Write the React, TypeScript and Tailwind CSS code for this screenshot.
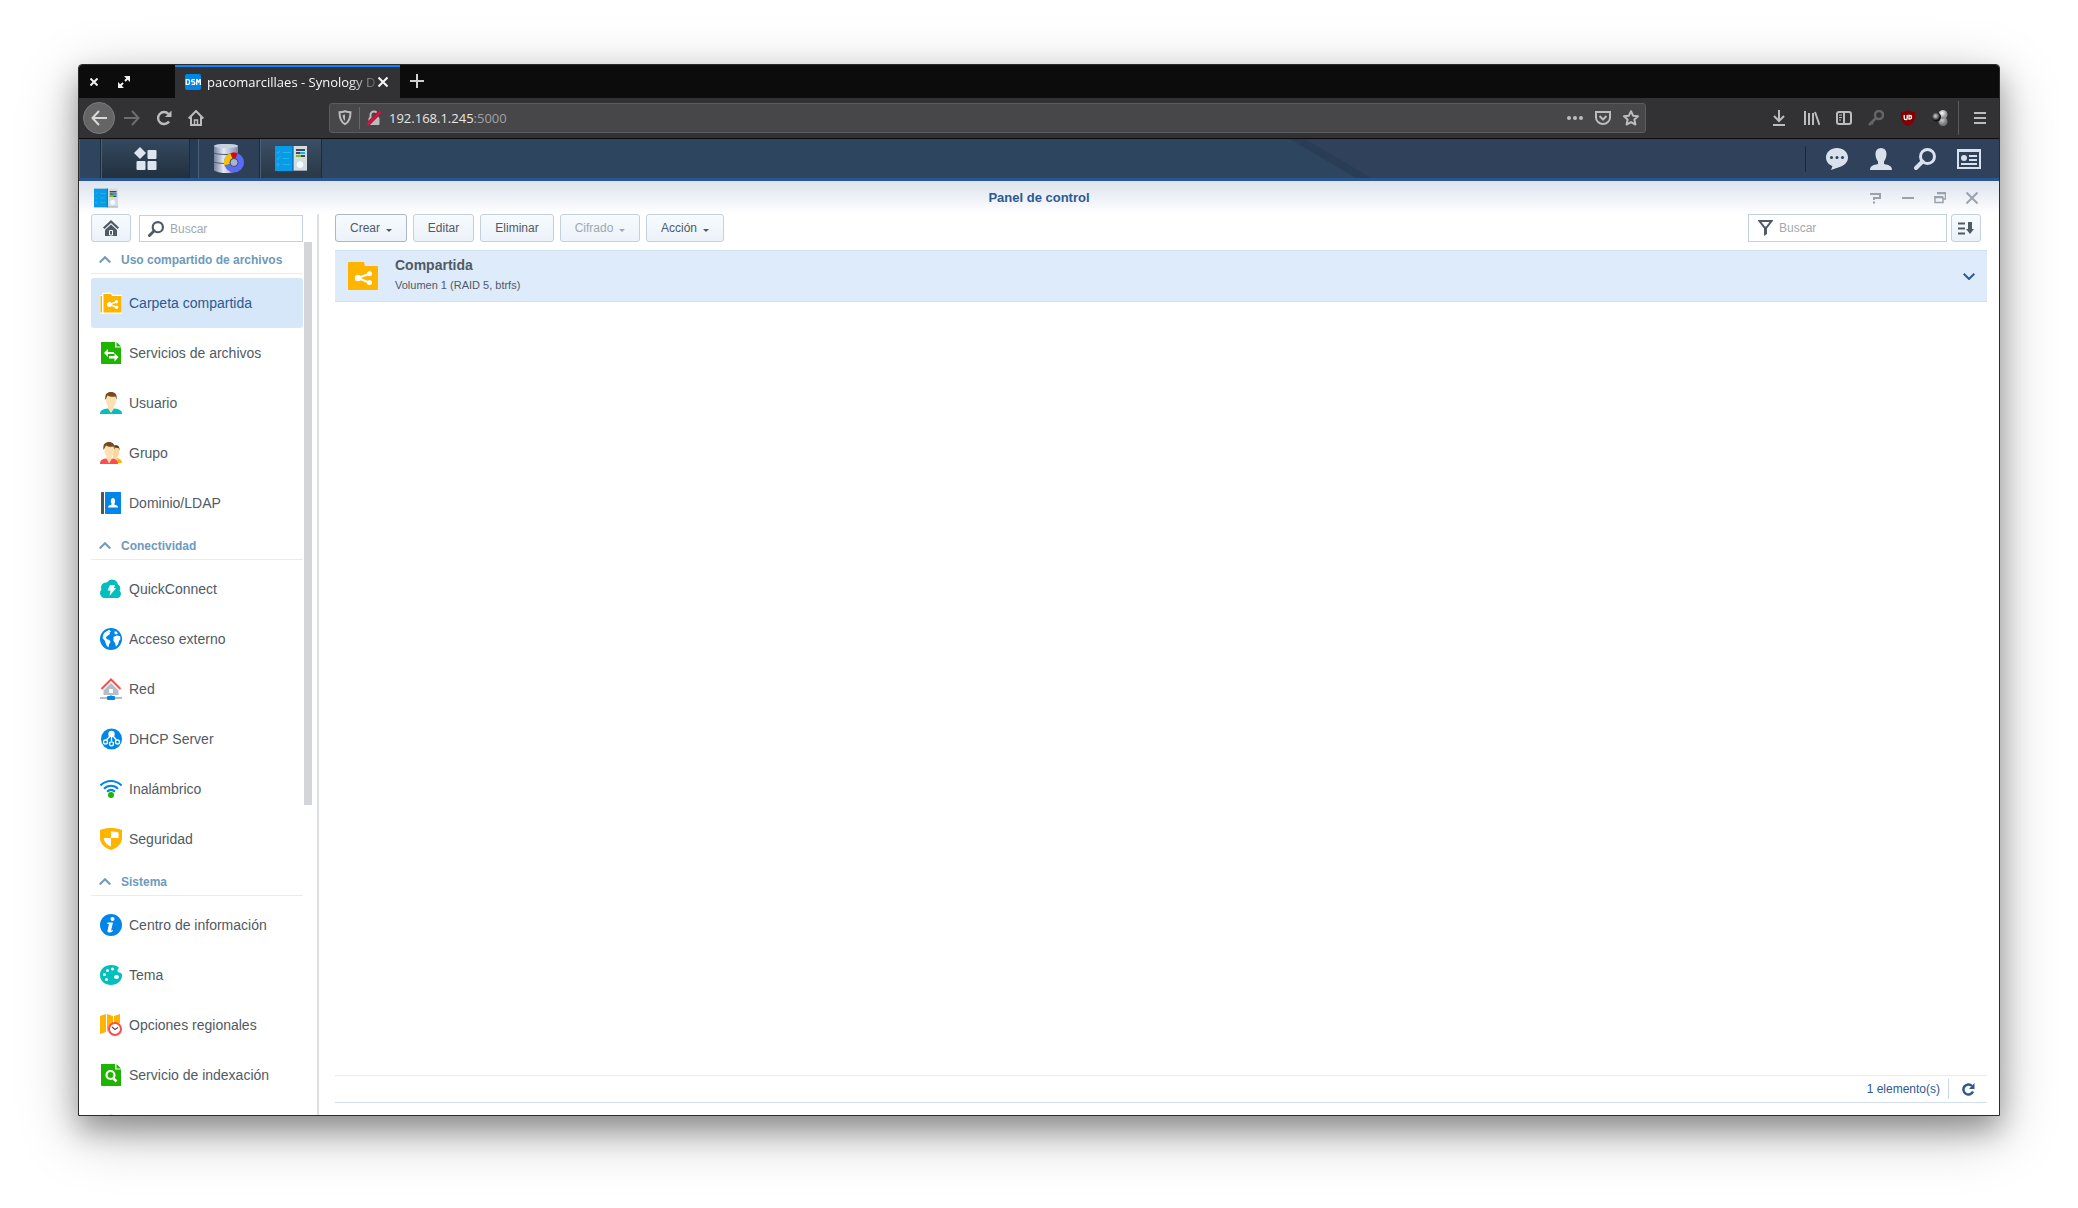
import React from "react";

type IconProps = { className?: string };

const font = "font-['Liberation_Sans',Arial,sans-serif]";

/* ---------- shared drawings ---------- */

function PanelLogo({ className }: IconProps) {
  return (
    <svg viewBox="0 0 32 25" className={className} aria-hidden="true">
      <rect x="18" y="0" width="14" height="25" fill="#d5dbe0" />
      <rect x="18" y="24" width="14" height="1" fill="#9aa3ab" />
      <rect x="0" y="0" width="18.500" height="25" fill="#0b9be6" />
      <rect x="17" y="0" width="1.500" height="25" fill="#0a7cc4" />
      <g fill="none" stroke="#19b9f2" strokeWidth="1">
        <path d="M2 6l1 1.500 2-3M8 6.500h8M2 12l1 1.500 2-3M8 12.500h6" />
        <circle cx="3" cy="18.500" r="1.200" />
        <path d="M8 18.500h7" />
      </g>
      <path d="M21 4h9M21 10h9" stroke="#3f4a55" strokeWidth="2" />
      <path d="M21 7h9" stroke="#3f4a55" strokeWidth="2" />
      <path d="M25 7h5" stroke="#12b4ee" strokeWidth="2" />
      <path d="M21 10h5" stroke="#6cc514" strokeWidth="2" />
      <circle cx="25" cy="18.500" r="4" fill="#f6fbff" stroke="#bcdcec" strokeWidth="1" />
    </svg>
  );
}

function StorageLogo({ className }: IconProps) {
  return (
    <svg viewBox="0 0 30 29" className={className} aria-hidden="true">
      <defs>
        <linearGradient id="cyl" x1="0" x2="1">
          <stop offset="0" stopColor="#77839f" />
          <stop offset=".4" stopColor="#e3e8f3" />
          <stop offset="1" stopColor="#7f8bab" />
        </linearGradient>
      </defs>
      <path d="M0 2C0 .5 6 0 12 0s12 .5 12 2v24c0 1.500-6 3-12 3S0 27.500 0 26z" fill="url(#cyl)" />
      <path d="M0 9c4 2 20 2 24 0M0 18c4 2 20 2 24 0" fill="none" stroke="#4c5874" strokeWidth="1" />
      <ellipse cx="12" cy="2" rx="12" ry="2" fill="#c8d0e0" />
      <circle cx="20" cy="18.500" r="7" fill="none" stroke="#5a6cf5" strokeWidth="6" />
      <path d="M13.100 20.500A7 7 0 0 1 17.500 12" fill="none" stroke="#f5c400" strokeWidth="6" />
      <path d="M17.500 12A7 7 0 0 1 22.500 12" fill="none" stroke="#e60000" strokeWidth="6" />
      <circle cx="20" cy="18.500" r="4" fill="#aab4cb" stroke="#3f4a63" strokeWidth="1" />
    </svg>
  );
}

function ShareFolder({ className, tabbed = false }: IconProps & { tabbed?: boolean }) {
  if (tabbed) {
    return (
      <svg viewBox="0 0 22 22" className={className} aria-hidden="true">
        <path d="M0 4h2v17H0zM3 1.500h8.500l1 2H22V21H3z" fill="#fffaf0" stroke="#fff" strokeWidth="1.500" />
        <path d="M.500 4H2v16.500H.500zM3.500 2H11l1 2h9.500v16.500h-18z" fill="#ffb400" />
        <path d="M17 9.500L10 12.500l7 3" fill="none" stroke="#fff" strokeWidth="1.500" />
        <circle cx="9.500" cy="12.500" r="2.500" fill="#fff" />
        <circle cx="16.500" cy="9.800" r="1.700" fill="#fff" />
        <circle cx="16.500" cy="15.200" r="1.700" fill="#fff" />
      </svg>
    );
  }
  return (
    <svg viewBox="0 0 30 28" className={className} aria-hidden="true">
      <path d="M1 0h15l1 4h12a1 1 0 0 1 1 1v22a1 1 0 0 1-1 1H1a1 1 0 0 1-1-1V1a1 1 0 0 1 1-1z" fill="#ffb400" />
      <path d="M22 11.500L10 16l12 5" fill="none" stroke="#fff" strokeWidth="2" />
      <circle cx="10" cy="16" r="3.200" fill="#fff" />
      <circle cx="21.500" cy="11.700" r="2.500" fill="#fff" />
      <circle cx="21.500" cy="20.500" r="2.500" fill="#fff" />
    </svg>
  );
}

function Magnifier({ className }: IconProps) {
  return (
    <svg viewBox="0 0 22 22" className={className} fill="none" stroke="currentColor" aria-hidden="true">
      <circle cx="13.500" cy="8.500" r="7" strokeWidth="3" />
      <path d="M8.500 13.500L2 20" strokeWidth="4" strokeLinecap="round" />
    </svg>
  );
}

const Caret = () => (
  <svg viewBox="0 0 6 3" className="mt-1 h-[3px] w-[6px]" aria-hidden="true">
    <path d="M0 0h6L3 3z" fill="currentColor" />
  </svg>
);

/* ---------- sidebar icons (22 x 22) ---------- */

const svg22 = (children: React.ReactNode) => (
  <svg viewBox="0 0 22 22" className="size-[22px] shrink-0" aria-hidden="true">
    {children}
  </svg>
);

const icons = {
  folder: <ShareFolder tabbed className="size-[22px] shrink-0" />,
  files: svg22(
    <>
      <path d="M1 0h14v5.500h6V22H2a1 1 0 0 1-1-1z" fill="#1fb400" />
      <path d="M16.500 0L21 4.500h-4.500z" fill="#1fb400" />
      <path d="M4 11l4-4v3H14v2H8v3zM18.500 15.200L14.500 11v3H9v2.500h5.500v3z" fill="#fff" />
    </>,
  ),
  user: svg22(
    <>
      <path d="M0 22c0-4 3-5 8-5.500h6c5 .5 8 1.500 8 5.500z" fill="#00bfbd" />
      <path d="M8 12h6v4.500L11 21l-3-4.500z" fill="#ffe0b2" />
      <path d="M6 4h10v5c0 3.500-2.500 6-5 6s-5-2.500-5-6z" fill="#ffe0b2" />
      <path d="M5.500 8C4.500 2 7 0 11 0s6.500 2 5.500 8L15.500 4.500c-3 .5-6 .3-8-1z" fill="#7a4a1f" />
    </>,
  ),
  group: svg22(
    <>
      <path d="M17 16c3 1 5 2 5 5h-4z" fill="#ffb400" />
      <path d="M13 5h6v5c0 2-1 4-2 5v3l-4-1z" fill="#ffd59b" />
      <path d="M14 3.500c3-1 6 0 5.500 5l-1-2.500-4-.5z" fill="#4d3420" />
      <path d="M0 22c0-4 2-5 6-5.500h6c4 .5 6 1.500 6 5.500z" fill="#ff4b4b" />
      <path d="M6.500 12h5.500v4.500L9 21.500l-2.500-5z" fill="#ffe0b2" />
      <path d="M4.500 4h9.500v5c0 3.500-2.500 6-4.800 6S4.500 12.500 4.500 9z" fill="#ffe0b2" />
      <path d="M3.500 8C2.500 2 5.500 0 9 0s6.500 2 5.500 8l-1-3.500c-3 .5-5.500.3-7.500-1z" fill="#7a4a1f" />
    </>,
  ),
  domain: svg22(
    <>
      <rect x="1" y="0" width="3" height="22" rx=".5" fill="#4b5560" />
      <rect x="5" y="0" width="16" height="22" rx=".5" fill="#0086e8" />
      <path d="M8 15.500c0-2 2-2.500 3.500-2.800v-1.500c-1-1-1-5.200 1.500-5.200s2.500 4.200 1.500 5.200v1.500c1.500.3 3.500.8 3.500 2.800z" fill="#fff" />
    </>,
  ),
  quick: svg22(
    <>
      <path d="M5 20a5 5 0 0 1-3.500-8.500A5 5 0 0 1 7 4.500 6 6 0 0 1 18 6.500a4 4 0 0 1 1.500 6A4.500 4.500 0 0 1 18 20z" fill="#00bfbd" />
      <path d="M10 7h5l-1 3h2l-6.500 8 1-5.500H7.500z" fill="#fff" />
    </>,
  ),
  globe: svg22(
    <>
      <circle cx="11" cy="11" r="11" fill="#0086e8" />
      <path
        d="M3.500 6C5 4 7 2.500 9.500 2l1.500 1.500-1.500 1L10 6 8 7.500 6 9l.5 2 3 1 1 2L9 16.500l-.5 3C6 17.500 5.500 15 5 13L2.500 10 3 8zM13.500 9l3-1.500 3.500.5.500 3-1.500 2-1 3.500-2 2-1-3.500-1.500-2zM14.500 3.500h2l1.500 2-2 1-1.500-1z"
        fill="#fff"
      />
    </>,
  ),
  network: svg22(
    <>
      <path d="M11 5l7.500 7.500V17h-15v-4.500z" fill="#b3bec8" />
      <path d="M1.500 11L11 1.500 20.500 11" fill="none" stroke="#ff4b4b" strokeWidth="2" />
      <rect x="9" y="11" width="4" height="4" fill="#fff" />
      <path d="M0 20h22M11 17v3" stroke="#b3bec8" strokeWidth="2" />
      <rect x="7" y="18" width="8" height="4" rx="1" fill="#0086e8" />
    </>,
  ),
  dhcp: svg22(
    <>
      <circle cx="11.500" cy="11" r="10.500" fill="#0086e8" />
      <circle cx="11.500" cy="6" r="3.200" fill="#fff" />
      <g fill="none" stroke="#fff" strokeWidth="1.300">
        <path d="M11.500 8v5M10 8l-3.500 4M13 8l3.500 4" />
        <circle cx="5.500" cy="14" r="2" />
        <circle cx="11.500" cy="15.800" r="2" />
        <circle cx="17.500" cy="14" r="2" />
      </g>
    </>,
  ),
  wifi: svg22(
    <>
      <g fill="none" stroke="#0086e8" strokeWidth="2">
        <path d="M.500 7.500c6-6 15-6 21 0M4 10.800c4-4 10-4 14 0M7 13.800c2.500-2.400 5.500-2.400 8 0" />
      </g>
      <circle cx="11" cy="17" r="3" fill="#1fb400" />
    </>,
  ),
  shield: svg22(
    <>
      <path d="M0 2c4-1.500 7-2 11-2s7 .5 11 2v8c0 6-5 10-11 12C5 20 0 16 0 10z" fill="#ffb400" />
      <path d="M11 3.500c3 0 5 .3 7.500 1V10H11zM3.800 10H11v8.500C7 17 4 14 3.800 10z" fill="#fff" />
    </>,
  ),
  info: svg22(
    <>
      <circle cx="11" cy="11" r="11" fill="#0086e8" />
      <circle cx="12.500" cy="5" r="2" fill="#fff" />
      <path d="M7.500 8.500H13L11 16.500l2-.5-.5 1.500c-2 1.500-5.500 1.500-5-1L9 10H7.200z" fill="#fff" />
    </>,
  ),
  palette: svg22(
    <>
      <path d="M11 1c4 0 7 1 8 3-2 1.500-2 4 0 4.500 2 .2 3 1 3 3C22 17 17 21 11 21S0 17 0 11 5 1 11 1z" fill="#00bfbd" />
      <g fill="#fff">
        <circle cx="4.500" cy="10.500" r="1.500" />
        <circle cx="7.500" cy="6.500" r="1.500" />
        <circle cx="12.500" cy="5" r="1.500" />
        <circle cx="6.500" cy="15.500" r="1.500" />
        <ellipse cx="16.500" cy="13" rx="2.500" ry="2" />
      </g>
    </>,
  ),
  region: svg22(
    <>
      <path d="M0 2l6-2v18l-6 2zM7 0l6 2v8l-6 8zM14 2l6-2v9h-6z" fill="#ffb400" />
      <circle cx="15" cy="15" r="6" fill="#fff" stroke="#ff4b4b" strokeWidth="2" />
      <path d="M12 13l3 2.500 3-2" fill="none" stroke="#4b5560" strokeWidth="1.300" />
    </>,
  ),
  indexing: svg22(
    <>
      <path d="M1 0h14v5.500h6V22H2a1 1 0 0 1-1-1z" fill="#1fb400" />
      <path d="M16.500 0L21 4.500h-4.500z" fill="#1fb400" />
      <circle cx="10.500" cy="11" r="4" fill="none" stroke="#fff" strokeWidth="2.200" />
      <path d="M13 14l3.500 3.500" stroke="#fff" strokeWidth="2.500" />
    </>,
  ),
  more: svg22(<circle cx="11" cy="11.500" r="10.800" fill="#1fb400" />),
};

type Item = { label: string; icon: keyof typeof icons };

const sections: { title: string; items: Item[] }[] = [
  {
    title: "Uso compartido de archivos",
    items: [
      { label: "Carpeta compartida", icon: "folder" },
      { label: "Servicios de archivos", icon: "files" },
      { label: "Usuario", icon: "user" },
      { label: "Grupo", icon: "group" },
      { label: "Dominio/LDAP", icon: "domain" },
    ],
  },
  {
    title: "Conectividad",
    items: [
      { label: "QuickConnect", icon: "quick" },
      { label: "Acceso externo", icon: "globe" },
      { label: "Red", icon: "network" },
      { label: "DHCP Server", icon: "dhcp" },
      { label: "Inalámbrico", icon: "wifi" },
      { label: "Seguridad", icon: "shield" },
    ],
  },
  {
    title: "Sistema",
    items: [
      { label: "Centro de información", icon: "info" },
      { label: "Tema", icon: "palette" },
      { label: "Opciones regionales", icon: "region" },
      { label: "Servicio de indexación", icon: "indexing" },
    ],
  },
];

/* ---------- browser chrome ---------- */

function TabStrip() {
  return (
    <div className="flex h-[33px] shrink-0 bg-[#0c0c0d]">
      <div className="flex w-24 items-center gap-5 pl-[11px] text-[#f0f0f0]">
        <button aria-label="Cerrar ventana">
          <svg viewBox="0 0 8 8" className="size-2" stroke="currentColor" strokeWidth="2">
            <path d="M.500.500l7 7M7.500.500l-7 7" />
          </svg>
        </button>
        <button aria-label="Maximizar">
          <svg viewBox="0 0 12 12" className="size-3" fill="currentColor" stroke="currentColor">
            <path d="M6 0h6v6zM0 6v6h6z" stroke="none" />
            <path d="M10 2L7 5M2 10l3-3" strokeWidth="2" />
          </svg>
        </button>
      </div>
      <div className="flex w-[225px] items-center border-t-2 border-[#0a84ff] bg-[#323234] pb-0.5 pl-[10px] text-[#f9f9fa]">
        <span className="flex size-4 items-center justify-center rounded-xs bg-[#0086e8]">
          <svg viewBox="0 0 16 6" className="h-[6px] w-4" fill="none" stroke="#fff" strokeWidth="1.300" aria-label="DSM">
            <path d="M1.200.700h2q1.300 0 1.300 1.200v2.200q0 1.200-1.300 1.200h-2zM9.800.700H7.600q-1 0-1 1.100t1 1.100h1.200q1 0 1 1.200t-1 1.200H6.600M11.700 6V.700h.5l1.300 2.500L14.800.700h.5V6" />
          </svg>
        </span>
        <span className="ml-[6px] w-[168px] whitespace-nowrap font-['Open_Sans',sans-serif] text-[13px] leading-5 [mask-image:linear-gradient(to_right,black_84%,transparent_104%)]">
          pacomarcillaes - Synology Dis
        </span>
        <button aria-label="Cerrar pestaña" className="ml-[3px]">
          <svg viewBox="0 0 10 10" className="size-[10px]" stroke="currentColor" strokeWidth="2">
            <path d="M.500.500l9 9M9.500.500l-9 9" />
          </svg>
        </button>
      </div>
      <button aria-label="Nueva pestaña" className="ml-[10px] pb-0.5 text-[#d0d0d0]">
        <svg viewBox="0 0 14 14" className="size-[14px]" stroke="currentColor" strokeWidth="2">
          <path d="M7 0v14M0 7h14" />
        </svg>
      </button>
    </div>
  );
}

function NavBar() {
  const s = { fill: "none", stroke: "currentColor", strokeWidth: 2 } as const;
  return (
    <div className="flex h-[41px] shrink-0 items-center border-b border-[#0c0c0d] bg-[#323234] text-[#bcbcbe]">
      <button aria-label="Atrás" className="ml-1 flex size-8 items-center justify-center rounded-full border border-[#7b7b7c] bg-[#656566] text-[#d8d8d9]">
        <svg viewBox="0 0 16 16" className="size-4" {...s}><path d="M16 8H2M8 1L1.500 8 8 15" /></svg>
      </button>
      <button aria-label="Adelante" className="ml-[9px] text-[#6d6d6f]">
        <svg viewBox="0 0 16 16" className="size-4" {...s}><path d="M0 8h14M8 1l6.500 7L8 15" /></svg>
      </button>
      <button aria-label="Recargar" className="ml-4">
        <svg viewBox="0 0 16 16" className="size-4" {...s}>
          <path d="M13 11.500A6 6 0 1 1 12.500 4" strokeWidth="2.400" />
          <path d="M15.500.500v6.500H9z" fill="currentColor" stroke="none" />
        </svg>
      </button>
      <button aria-label="Inicio" className="ml-4">
        <svg viewBox="0 0 16 16" className="size-4" {...s}>
          <path d="M.700 8.500L8 1l7.300 7.500M3 7v8h10V7" />
          <path d="M6.500 15v-5h3v5" strokeWidth="1.500" />
        </svg>
      </button>
      <div className="ml-[125px] flex h-[30px] min-w-0 flex-1 items-center rounded-[3px] border border-[#5c5c5e] bg-[#474749] pl-2">
        <svg viewBox="0 0 14 16" className="h-4 w-[14px]" {...s}>
          <path d="M7 1.200c2 .7 4 1 5.500 1 0 6-1 9.500-5.500 12C2.500 11.700 1.500 8.200 1.500 2.200c1.500 0 3.500-.3 5.500-1z" />
          <path d="M7 4.500v6.500C5.200 9.500 4.700 8 4.700 5z" fill="currentColor" stroke="none" />
        </svg>
        <span className="ml-[7px] h-[22px] w-px bg-[#69696b]" />
        <svg viewBox="0 0 14 16" className="ml-[7px] h-4 w-[14px]" aria-hidden="true">
          <path d="M3.500 8V5a3.500 3.500 0 0 1 7 0v3" fill="none" stroke="#bcbcbe" strokeWidth="2" />
          <rect x="1.500" y="7.500" width="11" height="7.500" rx="1" fill="#bcbcbe" />
          <path d="M.500 14.500L13.500 1.500" stroke="#474749" strokeWidth="4" />
          <path d="M.500 14.500L13.500 1.500" stroke="#ff0039" strokeWidth="2" />
        </svg>
        <div className="ml-2 flex-1 font-['Open_Sans',sans-serif] text-[13px] leading-5 text-[#e6e6e7]">
          192.168.1.245<span className="text-[#a0a0a2]">:5000</span>
        </div>
        <div className="flex items-center gap-3 pr-[6px]">
          <svg viewBox="0 0 16 4" className="h-1 w-4" fill="currentColor">
            <circle cx="2" cy="2" r="2" /><circle cx="8" cy="2" r="2" /><circle cx="14" cy="2" r="2" />
          </svg>
          <svg viewBox="0 0 16 14" className="h-[14px] w-4" {...s}>
            <path d="M1 1h14v5.500a7 6.500 0 0 1-14 0z" /><path d="M4.500 5L8 8.500 11.500 5" />
          </svg>
          <svg viewBox="0 0 16 16" className="size-4" {...s} strokeLinejoin="round">
            <path d="M8 1.200l2.100 4.500 4.900.6-3.600 3.300 1 4.900L8 12.100l-4.400 2.400 1-4.900L1 6.300l4.900-.6z" />
          </svg>
        </div>
      </div>
      <div className="ml-[126px] flex items-center gap-4">
        <svg viewBox="0 0 16 16" className="size-4" {...s}><path d="M7 0v10M2 6l5 5 5-5M1 15h12" /></svg>
        <svg viewBox="0 0 16 16" className="size-4" {...s}><path d="M1 1v14M5 3v12M9 3v12M11 2l4.500 13" /></svg>
        <svg viewBox="0 0 16 16" className="size-4" {...s}>
          <rect x="1" y="2" width="14" height="12" rx="2" /><path d="M8 2v12" /><path d="M3 5h3M3 7.500h3M3 10h2" strokeWidth="1" />
        </svg>
        <svg viewBox="0 0 16 16" className="size-4 text-[#656567]" {...s}>
          <circle cx="11" cy="5" r="4" strokeWidth="2.500" /><path d="M8 8l-7 7M3 12l2 2" strokeWidth="2.500" />
        </svg>
        <svg viewBox="0 0 16 16" className="size-4" aria-label="uBlock">
          <path d="M8 0c2 1.500 5 2 7 2v5c0 5-3 7.500-7 9-4-1.500-7-4-7-9V2c2 0 5-.5 7-2z" fill="#800000" />
          <path d="M4.200 5v3q0 1.600 1.500 1.600T7.200 8V5M9 5.500v3.600h.8a1.800 1.800 0 0 0 0-3.600z" fill="none" stroke="#fff" strokeWidth="1.300" />
        </svg>
        <svg viewBox="0 0 16 16" className="size-4" aria-hidden="true">
          <defs>
            <radialGradient id="ball" cx=".4" cy=".35"><stop offset="0" stopColor="#fff" /><stop offset="1" stopColor="#909090" /></radialGradient>
            <radialGradient id="dark" cx=".4" cy=".4"><stop offset="0" stopColor="#ddd" /><stop offset="1" stopColor="#111" /></radialGradient>
          </defs>
          <circle cx="11" cy="11.500" r="4.500" fill="url(#ball)" opacity=".75" />
          <circle cx="11" cy="4.500" r="4.500" fill="url(#ball)" />
          <circle cx="4.500" cy="7" r="4.500" fill="url(#dark)" />
        </svg>
      </div>
      <span className="ml-[10px] h-[34px] w-px bg-[#5a5a5c]" />
      <button aria-label="Menú" className="ml-[15px] mr-[13px]">
        <svg viewBox="0 0 12 12" className="size-3" {...s}><path d="M0 1h12M0 6h12M0 11h12" /></svg>
      </button>
    </div>
  );
}

/* ---------- DSM desktop ---------- */

function Taskbar() {
  const tile = "flex h-full items-center justify-center border-x border-l-[#4a6078] border-r-[#1c2b3c]";
  return (
    <div className="flex h-[42px] shrink-0 items-center border-b-3 border-[#2a5690] bg-[#2e4560]">
      <div className={`${tile} w-[22px]`} />
      <button aria-label="Menú principal" className={`${tile} w-[89px] bg-[linear-gradient(to_bottom,#34495f,#22303f)]`}>
        <svg viewBox="0 0 23 23" className="size-[23px]" fill="#dde6f0">
          <path d="M6 0l6 6-6 6-6-6z" />
          <rect x="13.500" y="3" width="9" height="9" rx="1" />
          <rect x="2.500" y="14" width="9" height="9" rx="1" />
          <rect x="13.500" y="14" width="9" height="9" rx="1" />
        </svg>
      </button>
      <div className="h-full w-[8px] bg-[#273c56]" />
      <button aria-label="Administrador de almacenamiento" className={`${tile} w-[62px] bg-[#2d4058]`}>
        <StorageLogo className="h-[29px] w-[30px]" />
      </button>
      <button aria-label="Panel de control" className={`${tile} w-[62px] bg-[linear-gradient(to_bottom,#3b4f65,#2a3847)]`}>
        <PanelLogo className="h-[25px] w-8" />
      </button>
      <div className="flex h-full min-w-0 flex-1 justify-end overflow-hidden">
        <svg viewBox="0 0 515 39" className="h-[39px] w-[515px] shrink-0" aria-hidden="true">
          <path d="M15 0h500v39H81z" fill="#30415b" />
          <path d="M0 0h15l66 39H66z" fill="#2a3d56" />
        </svg>
      </div>
      <div className="flex h-full items-center bg-[#30415b] pr-[18px] text-[#d8e1ec]">
        <span className="h-[26px] w-px bg-[#1b2838]" />
        <button aria-label="Notificaciones" className="ml-5">
          <svg viewBox="0 0 22 22" className="size-[22px]">
            <path d="M11 0c6 0 11 4 11 9.500 0 4-3 7.500-7 9L5 22l1.500-4C3 17 0 13.500 0 9.500 0 4 5 0 11 0z" fill="currentColor" />
            <circle cx="5.500" cy="9.500" r="1.500" fill="#2f425b" /><circle cx="11" cy="9.500" r="1.500" fill="#2f425b" /><circle cx="16.500" cy="9.500" r="1.500" fill="#2f425b" />
          </svg>
        </button>
        <button aria-label="Usuario" className="ml-[22px]">
          <svg viewBox="0 0 22 22" className="size-[22px]" fill="currentColor">
            <path d="M0 22c0-4 3-5 8-6v-2.500C4.500 9 4 0 11 0s6.500 9 3 13.500V16c5 1 8 2 8 6z" />
          </svg>
        </button>
        <button aria-label="Buscar" className="ml-[22px]"><Magnifier className="size-[22px]" /></button>
        <button aria-label="Widgets" className="ml-[21px]">
          <svg viewBox="0 0 24 20" className="h-5 w-6" fill="none" stroke="currentColor" strokeWidth="2">
            <path d="M1 2h22v17H1z" /><path d="M0 1.500h24" strokeWidth="3" />
            <circle cx="7" cy="9" r="3" fill="currentColor" stroke="none" />
            <path d="M12 7h8M12 11h8M4 15h16" />
          </svg>
        </button>
      </div>
    </div>
  );
}

function WindowHeader() {
  return (
    <header className="grid h-[33px] shrink-0 grid-cols-[1fr_auto_1fr] items-center bg-linear-to-b from-[#dde3ee] to-white px-[15px]">
      <PanelLogo className="h-5 w-6" />
      <h1 className="text-[13px] font-bold leading-4 text-[#2b5a93]">Panel de control</h1>
      <div className="flex items-center gap-5 justify-self-end pr-[6px] text-[#9ba2ac]">
        <button aria-label="Ayuda"><svg viewBox="0 0 12 12" className="size-3" fill="none" stroke="currentColor" strokeWidth="2"><path d="M0 2h10v4H4v2M4 9.500v2" /></svg></button>
        <button aria-label="Minimizar"><svg viewBox="0 0 12 12" className="size-3" stroke="currentColor" strokeWidth="2"><path d="M0 6h12" /></svg></button>
        <button aria-label="Restaurar"><svg viewBox="0 0 12 12" className="size-3" fill="none" stroke="currentColor" strokeWidth="1.500"><path d="M3 1.500h8.500V7H9.500M1 5.500h8v5H1z" /><path d="M3 1h9M0 5h9" strokeWidth="2" /></svg></button>
        <button aria-label="Cerrar"><svg viewBox="0 0 12 12" className="size-3" stroke="currentColor" strokeWidth="2"><path d="M.500.500l11 11M11.500.500l-11 11" /></svg></button>
      </div>
    </header>
  );
}

const btn = "flex h-7 items-center justify-center rounded-[3px] border bg-linear-to-b from-[#f7fbfe] to-[#ebf2f8] text-[12px] leading-4";

function Sidebar() {
  return (
    <aside className="flex w-60 shrink-0 flex-col border-r-2 border-[#dedfe1] pl-3">
      <div className="flex shrink-0 gap-2">
        <button aria-label="Inicio" className={`${btn} w-10 border-[#c3d0de] text-[#4f5a66]`}>
          <svg viewBox="0 0 16 16" className="size-4" aria-hidden="true">
            <path d="M8 0l8 7.500-1.500 1.500L8 3 1.500 9 0 7.500z" fill="currentColor" />
            <path d="M8 4.500l6 5.500v6H2v-6z" fill="currentColor" />
            <path d="M6.500 10.500h3V15h-3z" fill="none" stroke="#fff" strokeWidth="1" />
          </svg>
        </button>
        <label className="mt-px flex h-[27px] w-[164px] items-center border border-[#c3d0de] pl-2 text-[#4f5a66]">
          <Magnifier className="size-4" />
          <input aria-label="Buscar" placeholder="Buscar" className="ml-[6px] w-28 text-[12px] leading-4 outline-none placeholder:text-[#a0a9b4]" />
        </label>
      </div>
      <div className="flex min-h-0 flex-1 overflow-hidden">
        <nav className="h-0 w-[212px]">
          {sections.map((sec) => (
            <section key={sec.title}>
              <button className="mb-1 flex h-8 w-full items-center gap-[10px] border-b border-[#e9ebed] pb-px pl-2 pt-[5px] text-[12px] font-bold leading-4 text-[#6d9abc]">
                <svg viewBox="0 0 12 7" className="h-[7px] w-3" fill="none" stroke="currentColor" strokeWidth="2"><path d="M.700 6.500L6 1.200l5.300 5.300" /></svg>
                {sec.title}
              </button>
              <ul>
                {sec.items.map((it) => {
                  const active = it.icon === "folder";
                  return (
                    <li key={it.label}>
                      <a
                        href="#"
                        className={`flex h-[50px] items-center gap-[7px] rounded-[3px] pl-[9px] text-[14px] leading-5 ${active ? "bg-[#d6e7f9] text-[#2b5a93]" : "text-[#505a64]"}`}
                      >
                        {icons[it.icon]}
                        {it.label}
                      </a>
                    </li>
                  );
                })}
              </ul>
            </section>
          ))}
          <div className="flex h-[50px] items-center pl-[9px]">{icons.more}</div>
        </nav>
        <div className="ml-px h-[563px] w-2 bg-[#d3d5d8]" />
      </div>
    </aside>
  );
}

function Content() {
  const b = "border-[#c3d0de] text-[#505a64]";
  return (
    <main className="flex min-w-0 flex-1 flex-col pl-4 pr-3">
      <div className="flex shrink-0 gap-[6px]">
        <button className={`${btn} w-[72px] gap-[6px] border-[#abb7c5] text-[#505a64]`}>Crear <Caret /></button>
        <button className={`${btn} w-[61px] ${b}`}>Editar</button>
        <button className={`${btn} w-[74px] ${b}`}>Eliminar</button>
        <button disabled className={`${btn} w-[80px] gap-[6px] border-[#c3d0de] text-[#a0a8b0]`}>Cifrado <Caret /></button>
        <button className={`${btn} w-[78px] gap-[6px] ${b}`}>Acción <Caret /></button>
        <label className="ml-auto flex h-7 w-[199px] items-center border border-[#c3d0de] pl-[9px] text-[#4f5a66]">
          <svg viewBox="0 0 15 16" className="h-4 w-[15px]" aria-hidden="true">
            <path d="M1.500 1h12L8.500 7.500h-2z" fill="none" stroke="currentColor" strokeWidth="2" />
            <path d="M6 7h3v7l-3 2z" fill="currentColor" />
          </svg>
          <input aria-label="Filtrar" placeholder="Buscar" className="ml-[6px] min-w-0 flex-1 text-[12px] leading-4 outline-none placeholder:text-[#a0a9b4]" />
        </label>
        <button aria-label="Ordenar" className={`${btn} mr-[6px] -ml-0.5 w-[30px] ${b}`}>
          <svg viewBox="0 0 16 13" className="h-[13px] w-4" fill="none" stroke="currentColor" strokeWidth="2"><path d="M0 1.500h7M0 6.500h7M0 11.500h7" /><path d="M12 0v8" strokeWidth="4" /><path d="M8 7h8l-4 5z" fill="currentColor" stroke="none" /></svg>
        </button>
      </div>
      <div className="mt-2 flex h-[52px] shrink-0 items-center border-y border-[#d0dfee] bg-[#deebfb] pl-[13px] pr-3">
        <ShareFolder className="h-7 w-[30px]" />
        <div className="ml-[17px] pb-0.5 text-[#505a64]">
          <div className="text-[14px] font-bold leading-5">Compartida</div>
          <div className="text-[11px] leading-5">Volumen 1 (RAID 5, btrfs)</div>
        </div>
        <button aria-label="Desplegar" className="ml-auto text-[#2b5a93]">
          <svg viewBox="0 0 12 7" className="h-[7px] w-3" fill="none" stroke="currentColor" strokeWidth="2"><path d="M.700.700L6 6 11.300.700" /></svg>
        </button>
      </div>
      <footer className="mb-3 mt-auto flex h-[28px] items-center justify-end border-b border-t border-b-[#d3dfec] border-t-[#e9ebed] text-[12px] leading-4 text-[#2b5a93]">
        1 elemento(s)
        <span className="ml-2 h-5 w-px bg-[#c9d6e5]" />
        <button aria-label="Actualizar" className="ml-[13px] mr-3">
          <svg viewBox="0 0 13 13" className="size-[13px]" fill="none" stroke="currentColor">
            <path d="M11 8.500A5 5 0 1 1 10 3" strokeWidth="2.500" />
            <path d="M12.500 0v6H7z" fill="currentColor" stroke="none" />
          </svg>
        </button>
      </footer>
    </main>
  );
}

export default function App() {
  return (
    <div className="flex h-screen flex-col bg-white px-[78px] pb-[92px] pt-16">
      <div className={`${font} flex min-h-0 flex-1 flex-col overflow-hidden rounded-t-[4px] border border-[#2b2b2d] bg-white shadow-[0_14px_28px_rgba(0,0,0,0.3),0_16px_60px_rgba(0,0,0,0.26)]`}>
        <TabStrip />
        <NavBar />
        <Taskbar />
        <WindowHeader />
        <div className="flex min-h-0 flex-1">
          <Sidebar />
          <Content />
        </div>
      </div>
    </div>
  );
}
